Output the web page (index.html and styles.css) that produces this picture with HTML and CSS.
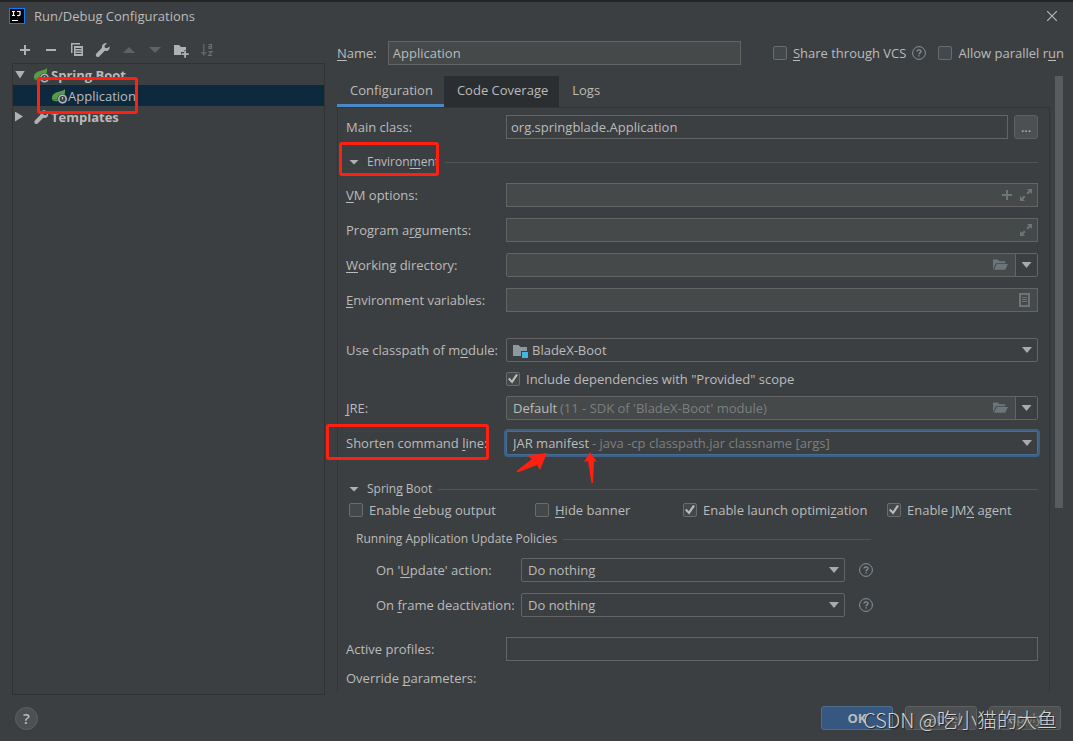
FILE: index.html
```html
<!DOCTYPE html>
<html lang="en">
<head>
<meta charset="utf-8">
<title>Run/Debug Configurations</title>
<link rel="stylesheet" href="styles.css">
</head>
<body>
<svg class="defs" aria-hidden="true">
  <symbol id="i-expand" viewBox="0 0 12 12"><path d="M7 0h5v5l-1.700-1.700-2.300 2.300-1.600-1.600 2.300-2.300zM5 12H0V7l1.700 1.700 2.300-2.300 1.600 1.600-2.300 2.300z"/></symbol>
  <symbol id="i-folder" viewBox="0 0 16 12"><path d="M0 11V0h5l2 2h6v2H3z"/><path d="M4 5h12l-3 6H1z"/></symbol>
  <symbol id="i-wrench" viewBox="0 0 16 16"><path d="M14.500 4.400 12 6.300 9.900 5.800 9.500 3.700 12 1.500C9.600.600 6.500 2.400 7 5.800L1.400 11.600a1.900 1.900 0 0 0 2.800 2.800L9.800 8.800c3 .800 5.400-1.500 4.700-4.400z"/></symbol>
  <symbol id="i-spring" viewBox="0 0 17 16"><path fill="#559c45" d="M14 1C12 4 2 3 1 9c-.4 2 .4 3.500 2 4 5 1.500 12-2 11-12z"/><path d="M2 12c4 0 8-2 10-5" fill="none" stroke="#3f7d34"/><circle cx="11.500" cy="11" r="5" fill="#3c3f41"/><circle cx="11.500" cy="11" r="3.700" fill="none" stroke="#aeb9c0" stroke-width="1.500"/><path d="M11.500 9v2.500" stroke="#aeb9c0" stroke-width="1.300"/></symbol>
  <symbol id="i-help" viewBox="0 0 14 14"><circle cx="7" cy="7" r="6.400" fill="none" stroke="#8b9298"/><path d="M5 5.600C5 3.200 9 3.200 9 5.500 9 7 7 6.800 7 8.300" fill="none" stroke="#8b9298" stroke-width="1.300"/><path d="M6.300 9.300h1.400v1.300H6.300z" fill="#8b9298"/></symbol>
</svg>

<div class="dialog">
  <header class="titlebar">
    <svg class="logo" viewBox="0 0 16 16" aria-hidden="true"><path fill="#087cfa" d="M0 0h16v16H0z"/><path fill="#000" d="M1 1h14v14H1z"/><path d="M3 3.500h3M4.500 3v5M3 7.500h3M8 3.500h3v3.200q0 1-2.800.8M3 12.500h6" fill="none" stroke="#fff" stroke-width="1.200"/></svg>
    <h1>Run/Debug Configurations</h1>
    <button class="icon-btn close" aria-label="Close"><svg viewBox="0 0 10 10"><path d="M0 0l10 10M10 0L0 10" fill="none" stroke="#b4b6b7" stroke-width="1.200"/></svg></button>
  </header>

  <div class="body">
    <aside class="side">
      <div class="toolbar">
        <button class="icon-btn" aria-label="Add"><svg viewBox="0 0 16 16"><path d="M7 3h2v4h4v2H9v4H7V9H3V7h4z"/></svg></button>
        <button class="icon-btn" aria-label="Remove"><svg viewBox="0 0 16 16"><path d="M3 7h10v2H3z"/></svg></button>
        <button class="icon-btn" aria-label="Copy"><svg viewBox="0 0 16 16"><path d="M2 1h9v1.500H3.500V11H2z"/><path fill-rule="evenodd" d="M5 4h9v10H5zM6.500 6v1h6V6zM6.500 8.500v1h6v-1zM6.500 11v1h6v-1z"/></svg></button>
        <button class="icon-btn" aria-label="Edit templates"><svg viewBox="0 0 16 16"><use href="#i-wrench"/></svg></button>
        <button class="icon-btn" aria-label="Move up" disabled><svg viewBox="0 0 16 16"><path d="M2 11l6-6 6 6z"/></svg></button>
        <button class="icon-btn" aria-label="Move down" disabled><svg viewBox="0 0 16 16"><path d="M2 5l6 6 6-6z"/></svg></button>
        <button class="icon-btn" aria-label="New folder"><svg viewBox="0 0 16 16"><path d="M1 3h5l2 2h5v3h-2v2H8v3H1z"/><path d="M11.200 8.500h1.800v2.700h2.700V13H13v2.700h-1.800V13H8.500v-1.800h2.700z"/></svg></button>
        <button class="icon-btn" aria-label="Sort alphabetically" disabled><svg viewBox="0 0 16 16"><path d="M4 2h1.500v8H8l-3.200 4L1.500 10H4z"/><path d="M9.500 2.700h3v4M12.500 4.500H10v1.800h2.500M9.500 9.700h3.500l-3.300 3.800h3.500" fill="none" stroke="#6a6d6f" stroke-width="1.200"/></svg></button>
      </div>
      <ul class="tree">
        <li class="node"><span class="arrow down"></span><svg class="tree-icon"><use href="#i-spring"/></svg><b>Spring Boot</b></li>
        <li class="node child selected"><svg class="tree-icon"><use href="#i-spring"/></svg><span>Application</span><span class="mark mark-app"></span></li>
        <li class="node"><span class="arrow right"></span><svg class="tree-icon"><use href="#i-wrench"/></svg><b>Templates</b></li>
      </ul>
    </aside>

    <main class="main">
      <div class="name-row">
        <label for="name"><u>N</u>ame:</label>
        <input class="field" id="name" type="text" value="Application">
        <label class="check share"><input type="checkbox"><span><u>S</u>hare through VCS</span></label>
        <svg class="help"><use href="#i-help"/></svg>
        <label class="check parallel"><input type="checkbox"><span>Allow parallel r<u>u</u>n</span></label>
      </div>

      <div class="scroller">
        <div class="pane">
          <div class="tabs" role="tablist">
            <button class="tab active" role="tab">Configuration</button>
            <button class="tab hover" role="tab">Code Coverage</button>
            <button class="tab" role="tab">Logs</button>
          </div>
          <form class="form">
            <div class="row">
              <label for="main">Main class:</label>
              <input class="field plain" id="main" type="text" value="org.springblade.Application">
              <button class="browse" type="button" aria-label="Browse">...</button>
            </div>
            <div class="section env"><span class="arrow down small"></span><span>Environ<u>m</u>ent</span><hr><span class="mark mark-env"></span></div>
            <div class="row">
              <label for="vm"><u>V</u>M options:</label>
              <div class="control"><input class="field" id="vm" type="text"><span class="tail"><svg class="plus" viewBox="0 0 10 10"><path d="M4 0h2v4h4v2H6v4H4V6H0V4h4z"/></svg><svg class="expand"><use href="#i-expand"/></svg></span></div>
            </div>
            <div class="row">
              <label for="args">Program a<u>r</u>guments:</label>
              <div class="control"><input class="field" id="args" type="text"><span class="tail"><svg class="expand"><use href="#i-expand"/></svg></span></div>
            </div>
            <div class="row">
              <label for="dir"><u>W</u>orking directory:</label>
              <div class="control"><input class="field round" id="dir" type="text"><span class="tail flush"><svg class="folder"><use href="#i-folder"/></svg><button class="drop" type="button" aria-label="Recent directories"><span class="caret"></span></button></span></div>
            </div>
            <div class="row">
              <label for="envv"><u>E</u>nvironment variables:</label>
              <div class="control"><input class="field" id="envv" type="text"><span class="tail"><svg class="doc" viewBox="0 0 11 14"><path fill-rule="evenodd" d="M0 0h11v14H0zM2 2v10h7V2z"/><path d="M3 4h5v1H3zM3 6h5v1H3zM3 8h5v1H3z"/></svg></span></div>
            </div>
            <div class="row module">
              <label for="module">Use classpath of m<u>o</u>dule:</label>
              <div class="control"><select class="field plain round with-icon" id="module"><option>BladeX-Boot</option></select><svg class="module-icon" viewBox="0 0 16 14"><path fill="#8d989f" d="M0 1h5.500l2 2H14v4H8v5H0z"/><path fill="#40b6e0" d="M9 8h6v6H9z"/></svg><span class="tail"><span class="caret"></span></span></div>
            </div>
            <div class="row deps"><label class="check"><input type="checkbox" checked><span>Include dependencies with "Provided" scope</span></label></div>
            <div class="row">
              <label for="jre"><u>J</u>RE:</label>
              <div class="control"><input class="field round jre" id="jre" type="text" value="Default"><span class="hint hint-jre">(11 - SDK of 'BladeX-Boot' module)</span><span class="tail flush"><svg class="folder"><use href="#i-folder"/></svg><button class="drop" type="button" aria-label="Choose JRE"><span class="caret"></span></button></span></div>
            </div>
            <div class="row shorten">
              <label for="short">Shorten command <u>l</u>ine:</label>
              <div class="control"><select class="field plain round focused" id="short"><option>JAR manifest</option></select><span class="hint hint-short">- java -cp classpath.jar classname [args]</span><span class="tail"><span class="caret"></span></span></div>
              <span class="mark mark-short"></span>
              <svg class="pointers" viewBox="0 0 90 42"><path d="M37 8 17 10.500l5 3.500L6.500 26l1 1.500L27 20l3 5z"/><path d="M80 7l-6 10 4-1 3.500 22h1.500L84 16l3 1z"/></svg>
            </div>
            <div class="section boot"><span class="arrow down small"></span><span>Sprin<u>g</u> Boot</span><hr></div>
            <div class="checks">
              <label class="check"><input type="checkbox"><span>Enable <u>d</u>ebug output</span></label>
              <label class="check"><input type="checkbox"><span><u>H</u>ide banner</span></label>
              <label class="check"><input type="checkbox" checked><span>Enable launch optimi<u>z</u>ation</span></label>
              <label class="check"><input type="checkbox" checked><span>Enable JM<u>X</u> agent</span></label>
            </div>
            <div class="policies">
              <div class="section sub"><span>Running Application Update Policies</span><hr></div>
              <div class="row policy">
                <label for="upd">On '<u>U</u>pdate' action:</label>
                <div class="control"><select class="field plain round" id="upd"><option>Do nothing</option></select><span class="tail"><span class="caret"></span></span></div>
                <svg class="help"><use href="#i-help"/></svg>
              </div>
              <div class="row policy">
                <label for="frame">On <u>f</u>rame deactivation:</label>
                <div class="control"><select class="field plain round" id="frame"><option>Do nothing</option></select><span class="tail"><span class="caret"></span></span></div>
                <svg class="help"><use href="#i-help"/></svg>
              </div>
            </div>
            <div class="row profiles">
              <label for="prof">Active profiles:</label>
              <input class="field plain" id="prof" type="text">
            </div>
            <div class="row override"><span>Override <u>p</u>arameters:</span></div>
          </form>
        </div>
        <div class="scrollbar"></div>
      </div>
    </main>
  </div>

  <footer class="footer">
    <button class="round-help" aria-label="Help">?</button>
    <button class="btn primary">OK</button>
    <button class="btn">Cancel</button>
    <button class="btn">Apply</button>
    <span class="watermark">CSDN @吃小猫的大鱼</span>
  </footer>
</div>
</body>
</html>
```
FILE: styles.css
```css
* { box-sizing: border-box; }
body {
  margin: 0;
  background: #3c3f41;
  color: #bbbbbb;
  font: 13px/18px "Open Sans", "Noto Sans CJK SC", sans-serif;
}
button, input, select { font: inherit; color: inherit; margin: 0; padding: 0; border: 0; background: none; }
svg { display: block; flex: none; fill: #afb1b3; }
.defs { position: absolute; width: 0; height: 0; }
u { text-underline-offset: 2px; text-decoration-thickness: 1px; text-decoration-skip-ink: none; }
label { white-space: nowrap; }

.dialog { display: flex; flex-direction: column; min-height: 100vh; border-top: 2px solid #242424; }
.titlebar { display: flex; align-items: center; gap: 9px; height: 28px; padding: 0 16px 0 9px; }
.titlebar h1 { flex: 1; margin: 0; font-size: 13px; font-weight: 400; }
.logo { width: 16px; height: 16px; }
.icon-btn { width: 16px; height: 16px; }
.icon-btn svg { width: 16px; height: 16px; }
.icon-btn:disabled svg { fill: #5f6264; }
.icon-btn.close, .close svg { width: 10px; height: 10px; }

.body { flex: 1; display: flex; gap: 12px; padding: 0 9px 0 12px; }
.side { flex: none; width: 313px; display: flex; flex-direction: column; }
.toolbar { display: flex; gap: 10px; height: 33px; padding: 12px 5px 0; }
.tree { flex: 1; margin: 0; padding: 0; list-style: none; border: 1px solid #323232; }
.node { position: relative; display: flex; align-items: center; height: 21px; padding-left: 2px; }
.node.child { padding-left: 38px; }
.selected { background: #0d293e; }
.tree-icon { width: 17px; height: 16px; }
.node b { margin-left: 1px; }
.arrow { width: 10px; height: 8px; margin-right: 8px; background: #afb1b3; clip-path: polygon(0 0, 100% 0, 50% 100%); }
.arrow.right { width: 8px; height: 10px; margin-right: 10px; clip-path: polygon(0 0, 100% 50%, 0 100%); }
.arrow.small { height: 5px; margin: 0; }

.mark { position: absolute; border: 3px solid #ff2012; border-radius: 3px; pointer-events: none; z-index: 2; }
.mark-app { left: 24px; top: -8px; width: 101px; height: 37px; }
.mark-env { left: -7px; top: -11px; width: 100px; height: 34px; }
.mark-short { left: -20px; top: -7px; width: 163px; height: 36px; }

.main { flex: 1; min-width: 0; display: flex; flex-direction: column; }
.name-row { display: flex; align-items: center; height: 24px; margin: 11px 0; }
.name-row .field { flex: 1; margin: 0 32px 0 11px; }
.name-row .help { margin: 0 12px 0 6px; }
.scroller { flex: 1; display: flex; gap: 5px; padding: 0 1px 4px 0; }
.pane { flex: 1; min-width: 0; display: flex; flex-direction: column; }
.scrollbar { width: 8px; height: 432px; background: #595b5d; }
.tabs { display: flex; height: 31px; }
.tab { padding: 0 11px 0 13px; border-bottom: 3px solid transparent; line-height: 28px; }
.tab.active { border-color: #4a88c7; }
.tab.hover { background: #2b2e30; }
.form { flex: 1; padding: 7px 11px 0 8px; border: 1px solid #323435; border-bottom: 0; }

.field { flex: 1; width: 100%; min-width: 0; height: 24px; padding: 0 4px; border: 1px solid #646464; background: #45494a; appearance: none; outline: 0; }
.field.plain { background: #3c3f41; }
.field.round { border-radius: 2px; }
select.field, .jre.field { padding: 0 6px; }
.with-icon.field { padding-left: 25px; }
.field.focused { border-color: #466d94; box-shadow: 0 0 0 2px #3d6185; }
.row { position: relative; display: flex; align-items: center; height: 24px; margin-bottom: 11px; }
.row > label:not(.check) { flex: none; width: 160px; }
.control { position: relative; flex: 1; display: flex; }
.tail { position: absolute; right: 6px; top: 0; height: 24px; display: flex; align-items: center; gap: 8px; pointer-events: none; }
.tail svg { fill: #6b757a; }
.tail.flush { right: 1px; gap: 7px; }
.caret { width: 10px; height: 6px; background: #a8aaac; clip-path: polygon(0 0, 100% 0, 50% 100%); }
.drop { display: grid; place-items: center; width: 22px; height: 22px; border-left: 1px solid #646464; background: #3c3f41; pointer-events: auto; }
.plus { width: 10px; height: 10px; }
.expand { width: 12px; height: 12px; }
.folder { width: 15px; height: 12px; }
.doc { width: 11px; height: 14px; margin-right: 2px; }
.module-icon { position: absolute; left: 7px; top: 6px; width: 16px; height: 14px; }
.hint { position: absolute; top: 3px; color: #7c7f80; white-space: nowrap; pointer-events: none; }
.hint-jre { left: 54px; }
.hint-short { left: 86px; }
.browse { width: 24px; height: 24px; margin-left: 6px; border: 1px solid #5e6060; border-radius: 3px; background: #4c5052; }
.pointers { position: absolute; left: 164px; top: 14px; width: 90px; height: 42px; fill: #ff2012; z-index: 2; pointer-events: none; }

.section { position: relative; display: flex; align-items: center; height: 18px; font-size: 12px; padding-left: 3px; }
.section .arrow { margin-right: 8px; }
.section hr { flex: 1; height: 1px; margin: 0 0 0 6px; border: 0; background: #515355; }
.env { margin: 14px 0 12px; }
.module { margin-top: 26px; margin-bottom: 8px; }
.deps { height: 18px; margin-bottom: 8px; padding-left: 160px; }
.boot { margin-top: 25px; }
.check { display: flex; align-items: center; gap: 6px; }
.check input { display: grid; place-items: center; width: 14px; height: 14px; border: 1px solid #6b6b6b; border-radius: 2px; background: #43494a; appearance: none; }
.check input:checked::after { content: ""; width: 10px; height: 10px; background: #bbbbbb; clip-path: polygon(0 52%, 16% 38%, 38% 62%, 80% 0, 100% 10%, 42% 96%); }
.help { width: 14px; height: 14px; }
.checks { display: grid; grid-template-columns: 186px 148px 204px auto; height: 24px; padding-left: 3px; }
.policies { width: 525px; padding-left: 10px; }
.sub { margin: 8px 0 10px; padding: 0; }
.policy { padding-left: 20px; margin-right: -2px; }
.row.policy > label { width: 145px; }
.policy .help { margin-left: 14px; }
.profiles { margin-top: 20px; margin-bottom: 8px; }
.override { height: 18px; margin-bottom: 0; }

.footer { position: relative; display: flex; align-items: center; gap: 12px; height: 46px; padding: 0 12px 0 15px; }
.round-help { width: 23px; height: 23px; margin-right: auto; border: 1px solid #5e6162; border-radius: 50%; background: #4c5052; font-size: 15px; font-weight: 600; line-height: 20px; }
.btn { width: 72px; height: 24px; border: 1px solid #5e6060; border-radius: 3px; background: #4c5052; }
.btn.primary { border-color: #4c708c; background: #365880; font-weight: 700; }
.btn:not(.primary) { color: #888888; }
.watermark { position: absolute; right: 16px; top: 13px; color: #d2d3d4; font: 300 20px/24px "Noto Sans CJK SC", sans-serif; text-shadow: 1px 1px 1px #222222; white-space: nowrap; }
```
